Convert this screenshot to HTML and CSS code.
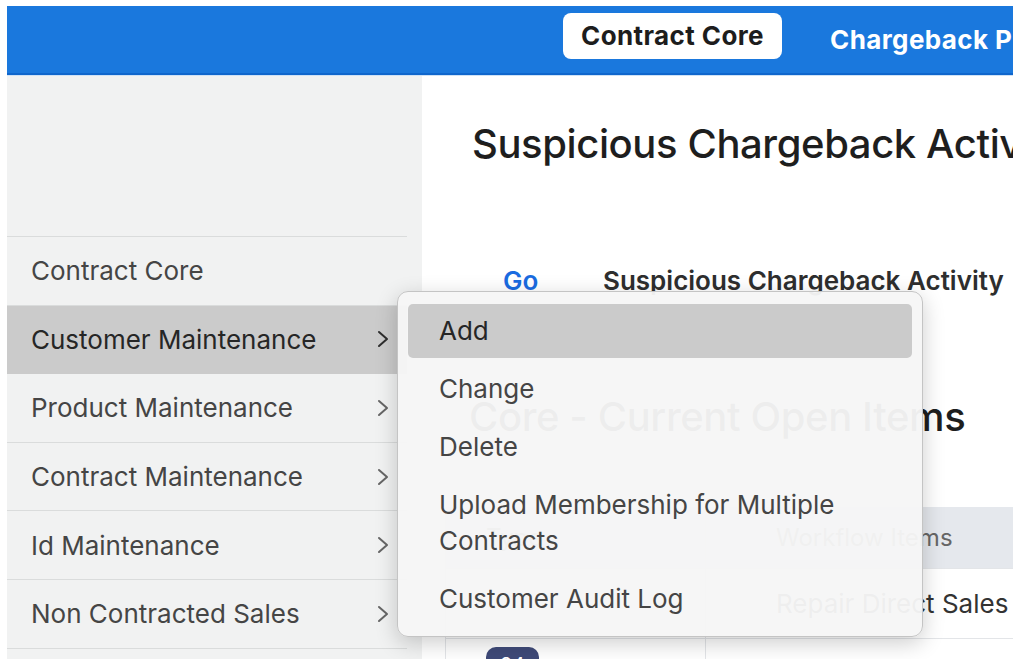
FILE: index.html
```html
<!DOCTYPE html>
<html lang="en">
<head>
<meta charset="utf-8">
<title>Contract Core</title>
<link rel="stylesheet" href="styles.css">
</head>
<body>
<div class="app">
  <header class="topbar">
    <a class="tab tab-active">Contract Core</a>
    <a class="tab">Chargeback Processing</a>
  </header>
  <div class="layout">
    <aside class="sidebar">
      <ul class="nav">
        <li class="nav-item">Contract Core</li>
        <li class="nav-item nav-open">Customer Maintenance<svg class="chev" viewBox="0 0 12 20"><polyline points="2,3 10,10 2,17"/></svg></li>
        <li class="nav-item">Product Maintenance<svg class="chev" viewBox="0 0 12 20"><polyline points="2,3 10,10 2,17"/></svg></li>
        <li class="nav-item">Contract Maintenance<svg class="chev" viewBox="0 0 12 20"><polyline points="2,3 10,10 2,17"/></svg></li>
        <li class="nav-item">Id Maintenance<svg class="chev" viewBox="0 0 12 20"><polyline points="2,3 10,10 2,17"/></svg></li>
        <li class="nav-item">Non Contracted Sales<svg class="chev" viewBox="0 0 12 20"><polyline points="2,3 10,10 2,17"/></svg></li>
      </ul>
    </aside>
    <main class="main">
      <h1 class="page-title">Suspicious Chargeback Activity</h1>
      <div class="quick-link">
        <a class="go">Go</a>
        <span class="link-label">Suspicious Chargeback Activity</span>
      </div>
      <h2 class="section-title">Core - Current Open Items</h2>
      <div class="table">
        <div class="trow thead">
          <div class="cell c1">Type</div>
          <div class="cell c2">Workflow Items</div>
        </div>
        <div class="trow">
          <div class="cell c1"></div>
          <div class="cell c2">Repair Direct Sales</div>
        </div>
        <div class="trow">
          <div class="cell c1 badge-cell"><span class="badge">24</span></div>
          <div class="cell c2">Reprice Invoices</div>
        </div>
      </div>
    </main>
    <div class="menu">
      <div class="menu-item menu-hover">Add</div>
      <div class="menu-item">Change</div>
      <div class="menu-item">Delete</div>
      <div class="menu-item">Upload Membership for Multiple Contracts</div>
      <div class="menu-item">Customer Audit Log</div>
    </div>
  </div>
</div>
</body>
</html>
```
FILE: styles.css
```css
* { box-sizing: border-box; }

html, body {
  margin: 0;
  background: #ffffff;
}

body {
  font-family: Inter, "Noto Sans", sans-serif;
  color: #222;
}

.app {
  width: 1013px;
  height: 659px;
  padding: 6px 0 0 7px;
  display: flex;
  flex-direction: column;
  overflow: hidden;
}

/* top navigation bar */
.topbar {
  height: 69px;
  flex: none;
  background: #1a78dd;
  border-bottom: 2px solid #0f66cc;
  box-shadow: 0 1px 0 #cfe2f6;
  display: flex;
  align-items: center;
  padding-left: 556px;
  gap: 48px;
  white-space: nowrap;
}

.tab {
  font-size: 26px;
  font-weight: 700;
  color: #ffffff;
  letter-spacing: 0.4px;
}

.tab-active {
  background: #ffffff;
  color: #1d1d1d;
  border-radius: 8px;
  height: 46px;
  padding: 0 18px;
  display: flex;
  align-items: center;
  margin-top: -8px;
}

.layout {
  flex: 1;
  display: flex;
  position: relative;
  margin-top: 1px;
}

/* left navigation */
.sidebar {
  width: 415px;
  flex: none;
  background: #f1f2f2;
  padding-top: 160px;
  padding-right: 15px;
}

.nav {
  list-style: none;
  margin: 0;
  padding: 0;
  border-top: 1px solid #dadcdc;
}

.nav-item {
  height: 68.6px;
  display: flex;
  align-items: center;
  justify-content: space-between;
  padding: 0 18px 0 24px;
  font-size: 26px;
  color: #454545;
  border-bottom: 1px solid #dadcdc;
}

.nav-open {
  background: #cbcbcb;
  color: #262626;
  border-bottom-color: #cbcbcb;
}

.chev {
  width: 12px;
  height: 20px;
  fill: none;
  stroke: #666;
  stroke-width: 2;
  stroke-linecap: round;
  stroke-linejoin: round;
}

.nav-open .chev { stroke: #2e2e2e; }

/* main content */
.main {
  flex: 1;
  padding-left: 50px;
  white-space: nowrap;
  overflow: hidden;
}

.page-title {
  margin: 43px 0 0;
  font-size: 40px;
  font-weight: 500;
  color: #1e1e1e;
  letter-spacing: -0.4px;
}

.quick-link {
  margin-top: 97px;
  display: flex;
  align-items: center;
  font-size: 26px;
  font-weight: 600;
}

.go {
  color: #1a6be0;
  padding-left: 31px;
  width: 131px;
}

.link-label {
  color: #2e2e2e;
}

.section-title {
  margin: 96px 0 0 -3px;
  font-size: 40px;
  font-weight: 500;
  color: #1e1e1e;
  letter-spacing: -0.4px;
}

.table {
  margin: 66px 0 0 -27px;
  border-left: 1px solid #e3e5e8;
}

.trow {
  display: flex;
  height: 70px;
  border-bottom: 1px solid #e3e5e8;
}

.thead {
  background: #e5e8ed;
  height: 62px;
}

.cell {
  display: flex;
  align-items: center;
  font-size: 26px;
  color: #333;
}

.thead .cell {
  color: #666;
  font-size: 24px;
}

.c1 {
  width: 260px;
  padding-left: 40px;
  border-right: 1px solid #e3e5e8;
}

.c2 {
  padding-left: 70px;
}

.badge-cell {
  align-items: flex-start;
  padding-top: 8px;
}

.badge {
  display: inline-block;
  background: #3f4a78;
  color: #fff;
  border-radius: 10px;
  padding: 6px 14px;
  font-size: 20px;
}

/* pop-out submenu */
.menu {
  position: absolute;
  left: 390px;
  top: 215px;
  width: 526px;
  padding: 12px 10px 10px;
  background: rgba(246, 246, 246, 0.96);
  border: 1px solid #c4c4c4;
  border-radius: 11px;
  box-shadow: 0 6px 22px rgba(0, 0, 0, 0.2);
  display: flex;
  flex-direction: column;
  gap: 4px;
}

.menu-item {
  padding: 9px 40px 9px 31px;
  font-size: 26px;
  line-height: 36px;
  color: #454545;
  border-radius: 5px;
}

.menu-hover {
  background: #cbcbcb;
  color: #262626;
}
```
